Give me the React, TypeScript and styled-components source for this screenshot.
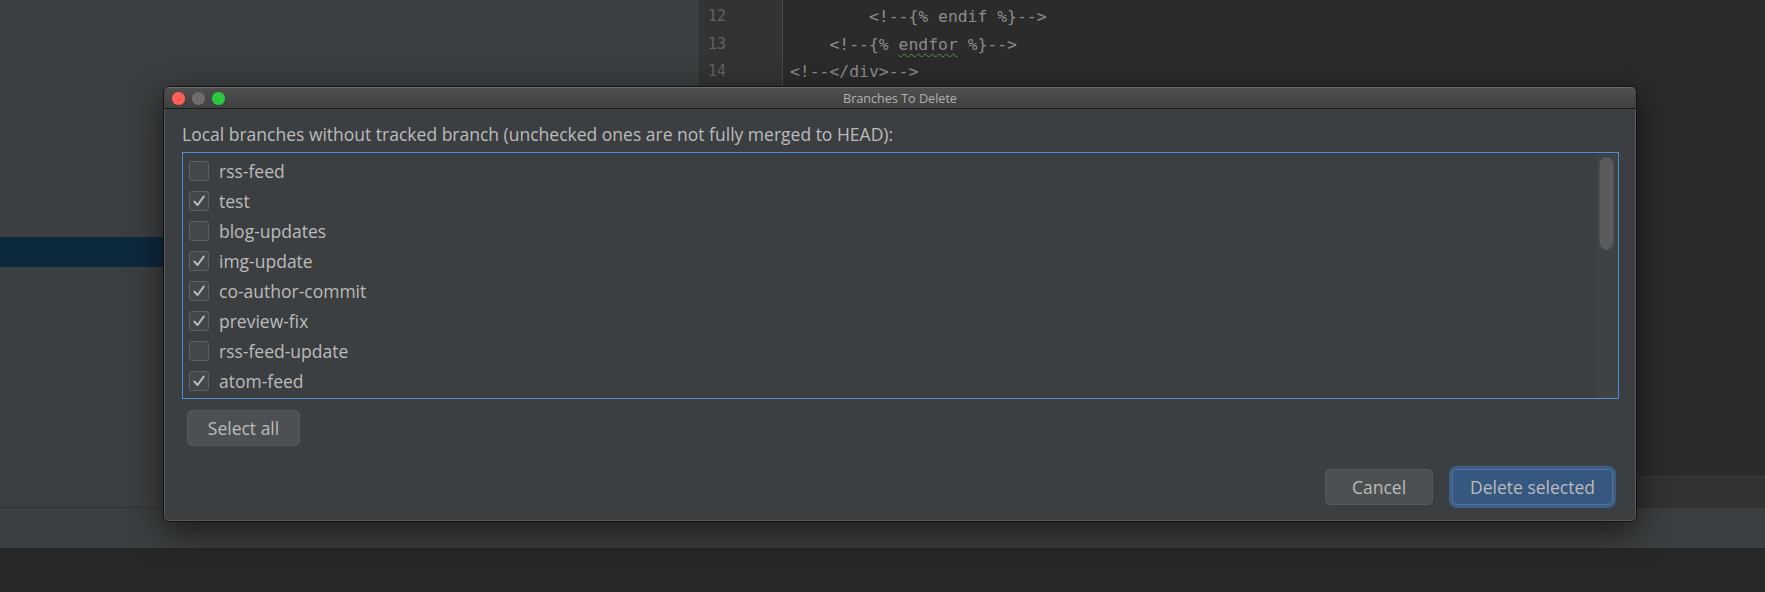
import React from "react";
import styled, { createGlobalStyle } from "styled-components";

const GlobalStyle = createGlobalStyle`
  html, body { margin: 0; padding: 0; background: #282828; overflow: hidden; }
  * { box-sizing: border-box; }
`;

const Screen = styled.div`
  position: relative;
  width: 1765px;
  height: 592px;
  display: flex;
  flex-direction: column;
  background: #282828;
  font-family: "Open Sans", "Liberation Sans", sans-serif;
`;

const Workspace = styled.div`
  height: 508px;
  display: flex;
  border-bottom: 1px solid #323232;
`;

const ProjectPanel = styled.div`
  width: 699px;
  background: #3c3f41;
  padding-top: 237px;
`;

const SelectedRow = styled.div`
  height: 30px;
  background: #0d293e;
`;

const Editor = styled.div`
  flex: 1;
  display: flex;
  flex-direction: column;
  background: #2b2b2b;
`;

const EditorBody = styled.div`
  flex: 1;
  display: flex;
`;

const Gutter = styled.div`
  width: 84px;
  background: #313335;
  border-right: 1px solid #4a4a4a;
  padding: 3px 0 0 9px;
  font-family: "DejaVu Sans Mono", "Liberation Mono", monospace;
  font-size: 15px;
  color: #606366;
`;

const Code = styled.div`
  flex: 1;
  padding: 3px 0 0 7px;
  font-family: "DejaVu Sans Mono", "Liberation Mono", monospace;
  font-size: 16.4px;
  color: #8c8c8c;
  white-space: pre;
`;

const Line = styled.div`
  height: 27.5px;
  line-height: 27.5px;
`;

const Typo = styled.span`
  text-decoration: underline wavy #5f8c4a;
  text-decoration-thickness: 1px;
  text-underline-offset: 3px;
`;

const EditorFooter = styled.div`
  height: 31px;
  border-top: 1px solid #3a3a3a;
  background: #303234;
`;

const ToolStrip = styled.div`
  height: 40px;
  background: #3c3f41;
`;

const BottomArea = styled.div`
  flex: 1;
  background: #282828;
`;

/* ---------- dialog ---------- */

const Dialog = styled.div`
  position: absolute;
  left: 163px;
  top: 86px;
  width: 1474px;
  height: 436px;
  display: flex;
  flex-direction: column;
  border: 1px solid #141414;
  border-radius: 6px;
  background: #3c3f41;
  box-shadow: inset 0 0 0 1px rgba(255, 255, 255, 0.13), 0 10px 34px rgba(0, 0, 0, 0.6);
  overflow: hidden;
`;

const TitleBar = styled.div`
  position: relative;
  height: 22px;
  flex: none;
  display: flex;
  align-items: center;
  justify-content: center;
  background: linear-gradient(#4f4f4f, #404040);
  border-top: 1px solid #6e6e6e;
  border-bottom: 1px solid #1a1a1a;
  font-size: 12.6px;
  color: #b2b2b2;
`;

const Lights = styled.div`
  position: absolute;
  left: 8px;
  top: 4px;
  display: flex;
  gap: 7.5px;
`;

const Light = styled.span<{ $c: string }>`
  width: 12.5px;
  height: 12.5px;
  border-radius: 50%;
  background: ${(p) => p.$c};
`;

const Body = styled.div`
  flex: 1;
  display: flex;
  flex-direction: column;
  padding: 14px 17px 16px 18px;
  color: #bbbbbb;
  font-size: 17.5px;
`;

const Label = styled.div`
  height: 22px;
  line-height: 22px;
  margin-bottom: 7px;
`;

const List = styled.div`
  position: relative;
  height: 247px;
  border: 1px solid #4a8ed3;
  padding: 3px 0 0 6px;
  display: flex;
  flex-direction: column;
`;

const Row = styled.div`
  height: 30px;
  display: flex;
  align-items: center;
  gap: 10px;
`;

const Box = styled.span`
  width: 20px;
  height: 20px;
  border: 1px solid #5e6163;
  border-radius: 3px;
  background: #43474a;
  display: flex;
  align-items: center;
  justify-content: center;
`;

const Track = styled.div`
  position: absolute;
  right: 0;
  top: 0;
  bottom: 0;
  width: 22px;
  background: #3f4244;
  padding: 4px 4px 0 3px;
`;

const Thumb = styled.div`
  height: 93px;
  border-radius: 8px;
  background: #595b5d;
  border: 1px solid #4f5153;
`;

const Button = styled.button<{ $w: number; $primary?: boolean }>`
  width: ${(p) => p.$w}px;
  height: 36px;
  border-radius: 5px;
  font-family: inherit;
  font-size: 17.5px;
  color: #bbbbbb;
  background: ${(p) => (p.$primary ? "#365880" : "#4c5052")};
  border: 1px solid ${(p) => (p.$primary ? "#4e74a0" : "#55595b")};
  box-shadow: ${(p) => (p.$primary ? "0 0 0 3px #3c5f88" : "none")};
  padding: 0;
  display: flex;
  align-items: center;
  justify-content: center;
`;

const SelectAllRow = styled.div`
  margin-top: 11px;
  padding-left: 5px;
`;

const Footer = styled.div`
  margin-top: auto;
  display: flex;
  justify-content: flex-end;
  gap: 19px;
  padding-right: 6px;
`;

const Check = () => (
  <svg width="14" height="14" viewBox="0 0 14 14">
    <path d="M2.4 7.6 L5.6 11 L11.7 2.6" fill="none" stroke="#b8b8b8" strokeWidth="2.1" strokeLinecap="round" strokeLinejoin="round" />
  </svg>
);

const branches: [string, boolean][] = [
  ["rss-feed", false],
  ["test", true],
  ["blog-updates", false],
  ["img-update", true],
  ["co-author-commit", true],
  ["preview-fix", true],
  ["rss-feed-update", false],
  ["atom-feed", true],
];

export default function App() {
  return (
    <>
      <GlobalStyle />
      <Screen>
        <Workspace>
          <ProjectPanel>
            <SelectedRow />
          </ProjectPanel>
          <Editor>
            <EditorBody>
              <Gutter>
                <Line>12</Line>
                <Line>13</Line>
                <Line>14</Line>
              </Gutter>
              <Code>
                <Line>{"        <!--{% endif %}-->"}</Line>
                <Line>
                  {"    <!--{% "}
                  <Typo>endfor</Typo>
                  {" %}-->"}
                </Line>
                <Line>{"<!--</div>-->"}</Line>
              </Code>
            </EditorBody>
            <EditorFooter />
          </Editor>
        </Workspace>
        <ToolStrip />
        <BottomArea />

        <Dialog>
          <TitleBar>
            <Lights>
              <Light $c="#fe5f57" />
              <Light $c="#6c6c6c" />
              <Light $c="#2ac73f" />
            </Lights>
            Branches To Delete
          </TitleBar>
          <Body>
            <Label>Local branches without tracked branch (unchecked ones are not fully merged to HEAD):</Label>
            <List>
              {branches.map(([name, checked]) => (
                <Row key={name}>
                  <Box>{checked && <Check />}</Box>
                  {name}
                </Row>
              ))}
              <Track>
                <Thumb />
              </Track>
            </List>
            <SelectAllRow>
              <Button $w={113}>Select all</Button>
            </SelectAllRow>
            <Footer>
              <Button $w={108}>Cancel</Button>
              <Button $w={161} $primary>
                Delete selected
              </Button>
            </Footer>
          </Body>
        </Dialog>
      </Screen>
    </>
  );
}
